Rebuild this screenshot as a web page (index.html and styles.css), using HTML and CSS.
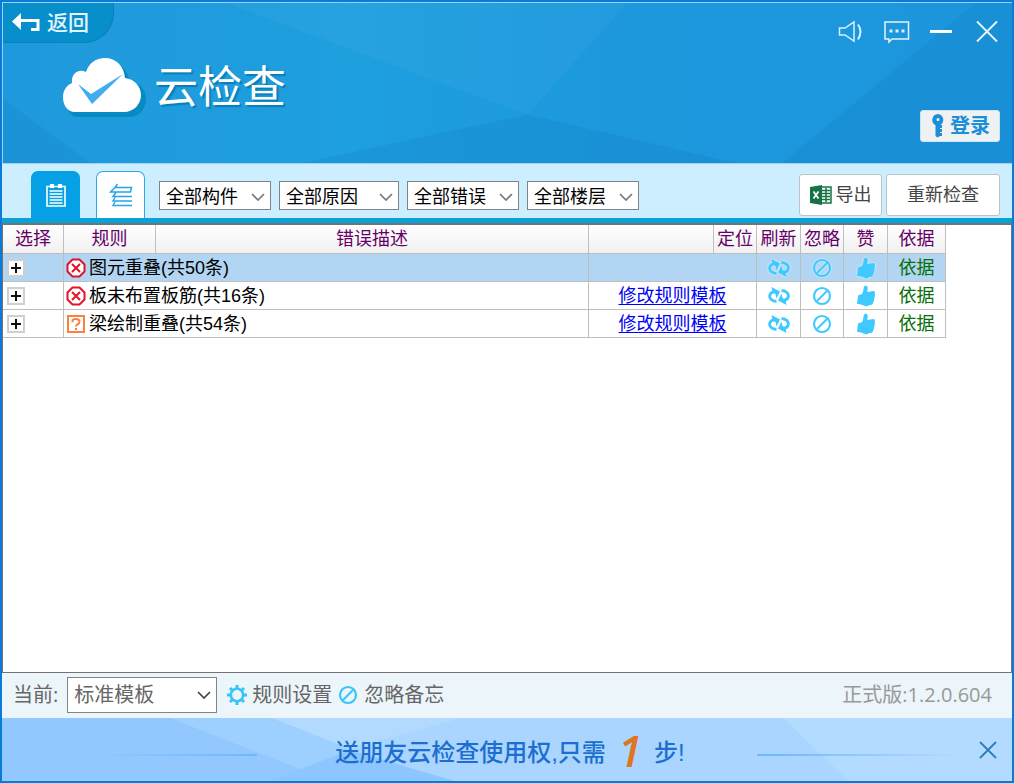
FILE: index.html
```html
<!DOCTYPE html>
<html lang="zh-CN">
<head>
<meta charset="utf-8">
<meta name="viewport" content="width=device-width, initial-scale=1">
<title>云检查</title>
<link rel="stylesheet" href="styles.css">
</head>
<body>
<svg class="defs" aria-hidden="true">
  <symbol id="chevron" viewBox="0 0 14 8"><path d="M1 1l6 6 6-6" fill="none" stroke="currentColor" stroke-width="1.7"/></symbol>
  <symbol id="error" viewBox="0 0 20 20"><path d="M6.5 1.500h7l5 5v7l-5 5h-7l-5-5v-7z" fill="#fff" stroke="#e6122a" stroke-width="2"/><path d="M6 6l8 8M14 6l-8 8" stroke="#e6122a" stroke-width="2"/></symbol>
  <symbol id="unknown" viewBox="0 0 20 20"><path d="M2 2h16v16H2z" fill="#fff" stroke="#fb8140" stroke-width="2"/><path d="M6.500 8.200V6.500Q6.500 5 10 5t3.500 2.500q0 1.800-1.700 2.700T10 12.500M10 14v2" fill="none" stroke="#fb8140" stroke-width="2"/></symbol>
  <symbol id="refresh" viewBox="0 0 22 20"><path d="M8.500 15.500C3 15 1.300 12 1.700 9.500 2 7.500 3.500 6 6 5.800" fill="none" stroke="currentColor" stroke-width="2.800"/><path d="M3.500 1L12 5.500 8.500 12.500 7.500 8 4.500 6.500z" fill="currentColor"/><path d="M13.500 4.500c5.500.5 7.200 3.500 6.800 6-.3 2-1.800 3.500-4.300 3.700" fill="none" stroke="currentColor" stroke-width="2.800"/><path d="M18.500 19L10 14.500l3.500-7 1 4.500 3 1.500z" fill="currentColor"/></symbol>
  <symbol id="ban" viewBox="0 0 20 20"><circle cx="10" cy="10" r="8" fill="none" stroke="currentColor" stroke-width="2.200"/><path d="M5 15L15 5" stroke="currentColor" stroke-width="2"/></symbol>
  <symbol id="thumb" viewBox="0 0 18 22"><path d="M1 10.500l4-1.500c1-1.500 1.500-4 1.700-6.500C7 .2 10.700.2 10.700 2.800c0 2-.2 3-.5 4.200l6.300-1c1.500.2 1.700 1.600 1.200 2.600.5 1 .4 2-.3 2.600.5 1 .3 2.200-.4 2.800.3 1.200 0 2-.6 2.600 0 1.800-.8 2.900-2.400 3.400H12l-2 1.500-8-2.500H0z" fill="currentColor"/></symbol>
</svg>

<div class="app">
  <header class="header">
    <svg class="facets" viewBox="0 0 1010 162" preserveAspectRatio="none" aria-hidden="true">
      <path d="M223 0L525 113 625 0z" fill="#fff" fill-opacity=".035"/>
      <path d="M318 158L525 113 733 162H300z" fill="#00508c" fill-opacity=".09"/>
      <path d="M973 0L780 162h230V0z" fill="#00508c" fill-opacity=".08"/>
      <path d="M0 97L88 162H0z" fill="#00508c" fill-opacity=".08"/>
    </svg>
    <div class="header-left">
      <button class="back" type="button">
        <svg width="28" height="20" viewBox="0 0 28 20" aria-hidden="true"><path d="M0 8.500L9 0v17z" fill="#fff"/><path d="M8 7.500h18v9h-7" fill="none" stroke="#fff" stroke-width="3"/></svg>
        <span>返回</span>
      </button>
      <div class="brand">
        <svg width="84" height="60" viewBox="0 0 84 60" aria-hidden="true">
          <path d="M16 59C6 59 4 51 4 44c0-7 3-12 9-15-1-8 5-14 14-11C31 9 38 5 47 5c11 0 19 8 19 19 10 0 17 7 17 17 0 10-7 18-17 18z" fill="#058bc2"/>
          <path d="M12 54C4 54 0 47 0 39c0-7 4-12 9-14-1-9 6-15 14-11C26 5 33 0 42 0c11 0 19 8 20 20 9 1 16 8 16 17 0 9-7 17-17 17z" fill="#fff"/>
          <path d="M15 26l13 10 32-20-31 30z" fill="#41acf0"/>
        </svg>
        <h1 class="brand-name">云检查</h1>
      </div>
    </div>
    <div class="header-right">
      <div class="window-tools">
        <button class="icon-button" type="button" aria-label="声音"><svg width="26" height="24" viewBox="0 0 26 24" fill="none" stroke="#d7f2ff"><path d="M1.500 8H7l9-6v19l-9-6H1.500z" stroke-width="1.500"/><path d="M20 4.500q5 7 0 15" stroke-width="2"/></svg></button>
        <button class="icon-button" type="button" aria-label="消息"><svg width="26" height="24" viewBox="0 0 26 24"><path d="M1 2h23.500v17H8l-3 3v-3H1z" fill="none" stroke="#e2f5ff" stroke-width="1.500"/><path d="M5.500 9.500h3v3h-3zm6 0h3v3h-3zm6 0h3v3h-3z" fill="#d7f2ff"/></svg></button>
        <button class="icon-button" type="button" aria-label="最小化"><svg width="22" height="24" viewBox="0 0 22 24"><path d="M0 11.500h22" stroke="#fff" stroke-width="3"/></svg></button>
        <button class="icon-button close" type="button" aria-label="关闭"><svg width="22" height="24" viewBox="0 0 22 24"><path d="M1 1.500l20 20m0-20l-20 20" stroke="#e6f6ff" stroke-width="1.800"/></svg></button>
      </div>
      <button class="login" type="button">
        <svg width="12" height="24" viewBox="0 0 12 24" aria-hidden="true"><path d="M6 0a6 6 0 0 0-2.500 11.300V22l2 1.500L8 22h2v-3H8v-1h2v-3H8v-1h2v-3H8.500A6 6 0 0 0 6 0zm0 4a1.500 1.500 0 1 1 0 3 1.500 1.500 0 0 1 0-3z" fill="#1b8fd8" fill-rule="evenodd"/></svg>
        <span>登录</span>
      </button>
    </div>
  </header>

  <div class="toolbar">
    <div class="tabs">
      <button class="tab tab-active" type="button" aria-label="列表"><svg width="20" height="24" viewBox="0 0 20 24"><path d="M1 3.500h18V23H1z" fill="none" stroke="#fff" stroke-width="1.600"/><path d="M4 1h4v4H4zm8 0h4v4h-4z" fill="#fff"/><path d="M3.500 8h13m-13 3h13m-13 3h13m-13 3h13m-13 3h13" stroke="#fff" stroke-width="1.600"/></svg></button>
      <button class="tab" type="button" aria-label="分组"><svg width="24" height="24" viewBox="0 0 24 24" fill="none" stroke="#27a5e8" stroke-width="1.500"><path d="M8.500 1L6 4.500h16.500L21.500 9H1.500L6 4.500M7 9.500L4 13.500h19M6 14.500L4 18h19M6 19l-2 3.500h19"/></svg></button>
    </div>
    <div class="filters">
      <div class="select-box"><select aria-label="构件"><option>全部构件</option></select><svg class="chevron"><use href="#chevron"/></svg></div>
      <div class="select-box wide"><select aria-label="原因"><option>全部原因</option></select><svg class="chevron"><use href="#chevron"/></svg></div>
      <div class="select-box"><select aria-label="错误"><option>全部错误</option></select><svg class="chevron"><use href="#chevron"/></svg></div>
      <div class="select-box"><select aria-label="楼层"><option>全部楼层</option></select><svg class="chevron"><use href="#chevron"/></svg></div>
    </div>
    <div class="actions">
      <button class="action" type="button">
        <svg width="22" height="20" viewBox="0 0 22 20" aria-hidden="true"><path d="M11 2h10v16H11z" fill="#fff" stroke="#177245" stroke-width="1.500"/><path d="M12 5.500h8M12 8.500h8M12 11.500h8M12 14.500h8M16 3v14" stroke="#177245" stroke-width="1.500"/><path d="M0 2l12-2v20L0 18z" fill="#177245"/><path d="M3.500 6.500l5 7m0-7l-5 7" stroke="#fff" stroke-width="1.800"/></svg>
        <span>导出</span>
      </button>
      <button class="action recheck" type="button">重新检查</button>
    </div>
  </div>

  <main class="panel">
    <table class="results">
      <colgroup><col class="c-pick"><col class="c-rule"><col class="c-desc"><col class="c-blank"><col class="c-small"><col class="c-icon"><col class="c-small"><col class="c-icon"><col class="c-basis"></colgroup>
      <thead>
        <tr><th>选择</th><th>规则</th><th>错误描述</th><th></th><th>定位</th><th>刷新</th><th>忽略</th><th>赞</th><th>依据</th></tr>
      </thead>
      <tbody>
        <tr class="selected">
          <td><button class="expand" type="button" aria-label="展开"></button></td>
          <td colspan="2"><div class="rule"><svg class="mark"><use href="#error"/></svg><span>图元重叠(共50条)</span></div></td>
          <td colspan="2"></td>
          <td><button class="cell-button" type="button" aria-label="刷新"><svg class="i-refresh"><use href="#refresh"/></svg></button></td>
          <td><button class="cell-button" type="button" aria-label="忽略"><svg class="mark"><use href="#ban"/></svg></button></td>
          <td><button class="cell-button" type="button" aria-label="赞"><svg class="i-thumb"><use href="#thumb"/></svg></button></td>
          <td class="basis">依据</td>
        </tr>
        <tr>
          <td><button class="expand" type="button" aria-label="展开"></button></td>
          <td colspan="2"><div class="rule"><svg class="mark"><use href="#error"/></svg><span>板未布置板筋(共16条)</span></div></td>
          <td colspan="2"><a class="edit" href="#">修改规则模板</a></td>
          <td><button class="cell-button" type="button" aria-label="刷新"><svg class="i-refresh"><use href="#refresh"/></svg></button></td>
          <td><button class="cell-button" type="button" aria-label="忽略"><svg class="mark"><use href="#ban"/></svg></button></td>
          <td><button class="cell-button" type="button" aria-label="赞"><svg class="i-thumb"><use href="#thumb"/></svg></button></td>
          <td class="basis">依据</td>
        </tr>
        <tr>
          <td><button class="expand" type="button" aria-label="展开"></button></td>
          <td colspan="2"><div class="rule"><svg class="mark"><use href="#unknown"/></svg><span>梁绘制重叠(共54条)</span></div></td>
          <td colspan="2"><a class="edit" href="#">修改规则模板</a></td>
          <td><button class="cell-button" type="button" aria-label="刷新"><svg class="i-refresh"><use href="#refresh"/></svg></button></td>
          <td><button class="cell-button" type="button" aria-label="忽略"><svg class="mark"><use href="#ban"/></svg></button></td>
          <td><button class="cell-button" type="button" aria-label="赞"><svg class="i-thumb"><use href="#thumb"/></svg></button></td>
          <td class="basis">依据</td>
        </tr>
      </tbody>
    </table>
  </main>

  <div class="status">
    <label for="template">当前:</label>
    <div class="select-box template"><select id="template"><option>标准模板</option></select><svg class="chevron"><use href="#chevron"/></svg></div>
    <button class="link-button" type="button">
      <svg width="22" height="22" viewBox="0 0 22 22" fill="none" stroke="#36c5fb" aria-hidden="true"><circle cx="11" cy="11" r="6.200" stroke-width="2.600"/><path d="M11 1v4m0 12v4M1 11h4m12 0h4M4 4l2.800 2.800m8.400 8.400L18 18M18 4l-2.800 2.800M6.800 15.200L4 18" stroke-width="3"/></svg>
      <span>规则设置</span>
    </button>
    <button class="link-button memo" type="button"><svg class="mark"><use href="#ban"/></svg><span>忽略备忘</span></button>
    <span class="version">正式版:1.2.0.604</span>
  </div>

  <footer class="banner">
    <svg class="facets" viewBox="0 0 1010 63" preserveAspectRatio="none" aria-hidden="true">
      <path d="M0 0H1010V63H0z" fill="#aad5ff"/>
      <path d="M0 0H270L336 25 350 33 450 63H0z" fill="#9dcfff"/>
      <path d="M0 0H168L303 53 278 63H0z" fill="#93c8ff"/>
      <path d="M268 63L348 32 452 63z" fill="#8dc5ff"/>
      <path d="M270 0L348 31 372 24 460 0z" fill="#b2daff"/>
      <path d="M781 0L846 63h164V0z" fill="#b3daff"/>
    </svg>
    <span class="rule-line rule-left"></span>
    <p class="promo"><span>送朋友云检查使用权,只需</span><em>1</em><span>步!</span></p>
    <div class="banner-end">
      <span class="rule-line rule-right"></span>
      <button class="icon-button" type="button" aria-label="关闭"><svg width="18" height="18" viewBox="0 0 18 18"><path d="M1 1l16 16m0-16L1 17" stroke="#2b7dba" stroke-width="1.800"/></svg></button>
    </div>
  </footer>
</div>
</body>
</html>
```
FILE: styles.css
```css
* { box-sizing: border-box; }

body {
  margin: 0;
  font-family: "Liberation Sans", "Noto Sans CJK SC", sans-serif;
  font-size: 18px;
  line-height: 24px;
  color: #000;
}

button, select {
  margin: 0;
  padding: 0;
  border: 0;
  background: none;
  font: inherit;
  color: inherit;
}

button { cursor: pointer; }
svg { display: block; flex: none; }
.defs { position: absolute; width: 0; height: 0; }

.app {
  display: flex;
  flex-direction: column;
  min-height: 100vh;
  border: 2px solid #0a7bd8;
}

.facets {
  position: absolute;
  inset: 0;
  width: 100%;
  height: 100%;
}

/* Header */
.header {
  position: relative;
  display: flex;
  justify-content: space-between;
  min-height: 162px;
  border: 1px solid #9bd3f1;
  border-right: 0;
  background: linear-gradient(90deg, #1f99dd, #1e9fde 35%, #1d98dd 60%, #1c95dd);
}

.header-left, .header-right { position: relative; }

.back {
  display: flex;
  align-items: center;
  gap: 7px;
  width: 111px;
  height: 40px;
  padding-left: 9px;
  border-right: 1px solid #0a7fb8;
  border-bottom: 1px solid #0a7fb8;
  border-bottom-right-radius: 30px;
  background: #078fcc;
  color: #e4f5fd;
  font-size: 21px;
  font-weight: 500;
}

.brand {
  display: flex;
  align-items: center;
  gap: 7px;
  padding: 14px 0 0 60px;
}

.brand-name {
  margin: 0;
  color: #fff;
  font-size: 44px;
  font-weight: 400;
  line-height: 62px;
  text-shadow: 2px 2px 1px #087fb8;
}

.header-right {
  display: flex;
  flex-direction: column;
  align-items: flex-end;
  gap: 66px;
  padding: 17px 12px 0 0;
}

.window-tools { display: flex; gap: 20px; padding-right: 2px; }
.icon-button { display: block; }
.close { margin-left: 4px; }

.login {
  display: flex;
  align-items: center;
  justify-content: center;
  gap: 6px;
  width: 80px;
  height: 32px;
  padding-left: 2px;
  border: 1px solid #c9e5f6;
  border-radius: 3px;
  background: #f0f1f2;
  color: #1b8fd8;
  font-size: 20px;
  font-weight: 700;
}

/* Toolbar */
.toolbar {
  display: flex;
  align-items: flex-end;
  min-height: 59px;
  padding: 0 12px 0 29px;
  border-bottom: 5px solid #06a2d9;
  background: #cceeff;
}

.tabs { display: flex; gap: 16px; }

.tab {
  display: grid;
  place-items: center;
  width: 49px;
  height: 47px;
  border: 1px solid #27a9ea;
  border-bottom: 0;
  border-radius: 7px 7px 0 0;
  background: #fff;
}

.tab-active { background: #06a1e5; border-color: #06a1e5; }

.filters { display: flex; gap: 8px; padding: 0 0 8px 14px; }

.select-box {
  display: grid;
  align-items: center;
  width: 112px;
  height: 29px;
}

.select-box.wide { width: 120px; }

.select-box select, .chevron { grid-area: 1 / 1; }

.select-box select {
  width: 100%;
  height: 100%;
  padding: 2px 0 0 6px;
  appearance: none;
  border: 1px solid #7f8488;
  border-radius: 0;
  background: #fff;
}

.chevron {
  justify-self: end;
  width: 14px;
  height: 8px;
  margin: 2px 6px 0 0;
  color: #777;
  pointer-events: none;
}

.actions { display: flex; gap: 4px; margin-left: auto; padding-bottom: 2px; }

.action {
  display: flex;
  align-items: center;
  justify-content: center;
  gap: 4px;
  width: 83px;
  height: 42px;
  border: 1px solid #bcc3c7;
  border-radius: 3px;
  background: #fff;
  color: #444;
}

.recheck { width: 114px; }

/* Results */
.panel {
  flex: 1;
  overflow: auto;
  border: 1px solid #737373;
  border-top-width: 2px;
  background: #fff;
}

.results {
  width: 943px;
  table-layout: fixed;
  border-collapse: separate;
  border-spacing: 0;
}

.c-pick { width: 61px; }
.c-rule { width: 92px; }
.c-desc { width: 433px; }
.c-blank { width: 125px; }
.c-small { width: 43px; }
.c-icon { width: 44px; }
.c-basis { width: 58px; }

.results th, .results td {
  height: 28px;
  padding: 0;
  border-right: 1px solid #bfbfbf;
  border-bottom: 1px solid #bfbfbf;
  text-align: center;
  white-space: nowrap;
}

.results th {
  height: 29px;
  background: linear-gradient(#fff, #f0f0f0);
  color: #660066;
  font-weight: 400;
}

.results .selected td { background: #b1d5f2; }
.selected .cell-button { filter: drop-shadow(0 0 1px #eaf6ff); }

.expand {
  display: block;
  width: 18px;
  height: 18px;
  margin-left: 4px;
  border: 2px solid #d0d0d0;
  background:
    linear-gradient(#111, #111) center / 10px 2px no-repeat,
    linear-gradient(#111, #111) center / 2px 10px no-repeat,
    #fff;
}

.rule { display: flex; align-items: center; gap: 3px; padding-left: 2px; }
.mark { width: 20px; height: 20px; }
.cell-button { display: block; margin: 0 auto; color: #3fcaff; }
.i-refresh { width: 22px; height: 20px; }
.i-thumb { width: 18px; height: 22px; }
.results td.basis { color: #087008; }
.edit { color: #0000f5; text-decoration: underline; text-underline-offset: 2px; }

/* Status bar */
.status {
  display: flex;
  align-items: center;
  min-height: 45px;
  padding: 0 20px 2px 11px;
  background: #ecf5fa;
  color: #666;
  font-family: "Open Sans", "Noto Sans CJK SC", sans-serif;
  font-size: 20px;
}

.template { width: 150px; height: 36px; margin: 0 9px; }
.template select { padding-top: 0; }
.template .chevron { margin-top: 0; color: #444; }
.link-button { display: flex; align-items: center; gap: 4px; }
.memo { gap: 6px; margin-left: 6px; }
.link-button .mark { color: #36c5fb; }
.version { margin-left: auto; color: #999; }

/* Banner */
.banner {
  position: relative;
  display: grid;
  grid-template-columns: 1fr auto 1fr;
  align-items: center;
  min-height: 63px;
}

.rule-line { position: relative; height: 2px; }

.rule-left {
  margin: 10px 72px 0 90px;
  background: linear-gradient(90deg, transparent, #6eb7ff);
}

.rule-right {
  flex: 1;
  margin-top: 10px;
  background: linear-gradient(90deg, #6eb7ff, transparent);
}

.promo {
  position: relative;
  display: flex;
  align-items: center;
  margin: 6px 0 0;
  padding-left: 6px;
  color: #1c6fd0;
  font-size: 24px;
  font-weight: 500;
}

.promo em {
  margin: 0 12px 6px;
  color: #df751c;
  font-family: "Open Sans", sans-serif;
  font-size: 44px;
  font-weight: 600;
  line-height: 48px;
}

.banner-end {
  position: relative;
  display: flex;
  align-items: center;
  gap: 20px;
  padding: 0 15px 0 72px;
}
```
